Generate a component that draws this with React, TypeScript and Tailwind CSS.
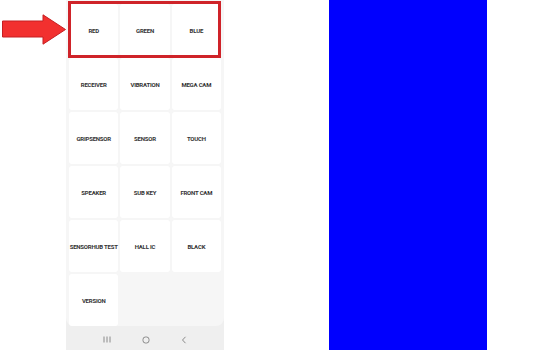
const ROWS = [
  ['RED', 'GREEN', 'BLUE'],
  ['RECEIVER', 'VIBRATION', 'MEGA CAM'],
  ['GRIPSENSOR', 'SENSOR', 'TOUCH'],
  ['SPEAKER', 'SUB KEY', 'FRONT CAM'],
  ['SENSORHUB TEST', 'HALL IC', 'BLACK'],
  ['VERSION'],
]

function Cell({ label }: { label: string }) {
  return (
    <div className="h-[52px] rounded-[3px] bg-white flex items-center justify-center">
      <span className="text-[6px] font-bold tracking-[-0.2px] text-[#333333] whitespace-nowrap">{label}</span>
    </div>
  )
}

export default function App() {
  const cells = ROWS.flat()
  return (
    <div className="relative w-[560px] h-[350px] bg-white flex overflow-hidden" style={{ fontFamily: 'Roboto, "Liberation Sans", sans-serif' }}>
      {/* arrow pointing at the first row */}
      <svg className="absolute left-[2px] top-[14px]" width="64" height="31" viewBox="0 0 64 31">
        <polygon
          points="0.5,7 41,7 41,0.8 63.5,15.5 41,30.2 41,23 0.5,23"
          fill="#f2302f"
          stroke="#c51f22"
          strokeWidth="1"
        />
      </svg>

      <div className="ml-[66px] w-[158px] h-full flex flex-col bg-[#efefef]">
        <div className="flex-1 bg-[#f6f6f6] rounded-b-[8px] px-[3px] pt-[4px]">
          <div className="grid grid-cols-3 gap-x-[2px] gap-y-[2px]">
            {cells.map(c => <Cell key={c} label={c} />)}
          </div>
        </div>
        <div className="h-[25px] pt-[3px] flex items-center justify-around px-[22px]">
          <svg width="8" height="7" viewBox="0 0 8 7">
            <path d="M1 0.5v6M4 0.5v6M7 0.5v6" stroke="#8a8a8a" strokeWidth="1" />
          </svg>
          <svg width="8" height="8" viewBox="0 0 8 8">
            <rect x="1" y="1" width="6" height="6" rx="2.4" fill="none" stroke="#8a8a8a" strokeWidth="1" />
          </svg>
          <svg width="6" height="8" viewBox="0 0 6 8">
            <path d="M4.5 0.8L1.5 4l3 3.2" fill="none" stroke="#8a8a8a" strokeWidth="1" />
          </svg>
        </div>
      </div>

      {/* highlight box around RED / GREEN / BLUE */}
      <div className="absolute left-[68px] top-[1px] w-[153px] h-[57px] border-[3px] border-[#cf2329]" />

      <div className="ml-[105px] w-[158px] h-full bg-[#0000fe]" />
    </div>
  )
}
